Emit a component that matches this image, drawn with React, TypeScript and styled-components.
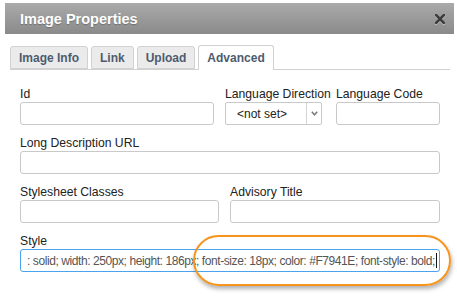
import styled, { createGlobalStyle } from "styled-components";

const GlobalStyle = createGlobalStyle`
  body {
    margin: 0;
    background: #fff;
    font-family: "Liberation Sans", Arial, sans-serif;
  }
`;

const tabs = ["Image Info", "Link", "Upload", "Advanced"];

const App = () => {
  return (
    <Page>
      <GlobalStyle />
      <Dialog>
        <TitleBar>
          <Title>Image Properties</Title>
          <CloseButton aria-label="close">
            <svg width="10" height="10" viewBox="0 0 10 10">
              <path d="M1.2 1.2 L8.8 8.8 M8.8 1.2 L1.2 8.8" stroke="#3c3c3c" strokeWidth="2.6" strokeLinecap="square" />
            </svg>
          </CloseButton>
        </TitleBar>
        <TabStrip>
          {tabs.map((tab) => (
            <Tab key={tab} active={tab === "Advanced"}>
              {tab}
            </Tab>
          ))}
        </TabStrip>
        <Form>
          <Row columns="194px 100px 104px">
            <Field>
              <Label>Id</Label>
              <TextInput />
            </Field>
            <Field>
              <Label>Language Direction</Label>
              <SelectBox>
                <SelectText>&lt;not set&gt;</SelectText>
                <SelectArrow>
                  <svg width="7" height="5" viewBox="0 0 7 5">
                    <path d="M0.8 0.8 L3.5 3.8 L6.2 0.8" fill="none" stroke="#7a7a7a" strokeWidth="1.5" />
                  </svg>
                </SelectArrow>
              </SelectBox>
            </Field>
            <Field>
              <Label>Language Code</Label>
              <TextInput />
            </Field>
          </Row>
          <Row columns="1fr">
            <Field>
              <Label>Long Description URL</Label>
              <TextInput />
            </Field>
          </Row>
          <Row columns="199px 210px">
            <Field>
              <Label>Stylesheet Classes</Label>
              <TextInput />
            </Field>
            <Field>
              <Label>Advisory Title</Label>
              <TextInput />
            </Field>
          </Row>
          <Row columns="1fr">
            <Field>
              <Label>Style</Label>
              <StyleInput>
                : solid; width: 250px; height: 186px; font-size: 18px; color: #F7941E; font-style: bold;
                <Caret />
              </StyleInput>
            </Field>
          </Row>
        </Form>
      </Dialog>
      <Highlight />
    </Page>
  );
};

const Page = styled.div`
  position: relative;
  width: 457px;
  height: 297px;
  padding-top: 3px;
  box-sizing: border-box;
`;

const Dialog = styled.div`
  margin-left: 5px;
  width: 449px;
`;

const TitleBar = styled.div`
  height: 31px;
  display: flex;
  align-items: center;
  justify-content: space-between;
  padding: 0 9px 0 15px;
  background: linear-gradient(#aaaaaa, #8a8a8a);
`;

const Title = styled.div`
  color: #fff;
  font-weight: bold;
  font-size: 14.5px;
  text-shadow: 0 1px 1px rgba(0, 0, 0, 0.25);
`;

const CloseButton = styled.div`
  width: 10px;
  height: 10px;
  display: flex;
  filter: drop-shadow(0 1px 0 rgba(255, 255, 255, 0.35));
`;

const TabStrip = styled.div`
  display: flex;
  align-items: flex-end;
  gap: 3px;
  margin: 10px 4px 0 5px;
  height: 25px;
  border-bottom: 1px solid #d1d1d1;
`;

const Tab = styled.div<{ active: boolean }>`
  box-sizing: border-box;
  height: ${({ active }) => (active ? "25px" : "23px")};
  margin-bottom: ${({ active }) => (active ? "-1px" : "0")};
  padding: 0 8px;
  display: flex;
  align-items: center;
  font-size: 12px;
  font-weight: bold;
  color: #4e5b6e;
  background: ${({ active }) => (active ? "#fff" : "#ebebeb")};
  border: 1px solid #d1d1d1;
  border-bottom: ${({ active }) => (active ? "none" : "1px solid #d1d1d1")};
  border-radius: 3px 3px 0 0;
`;

const Form = styled.div`
  padding: 17px 14px 0 15px;
  display: flex;
  flex-direction: column;
  gap: 11px;
`;

const Row = styled.div<{ columns: string }>`
  display: grid;
  grid-template-columns: ${({ columns }) => columns};
  column-gap: 11px;
`;

const Field = styled.div`
  display: flex;
  flex-direction: column;
  gap: 1px;
  min-width: 0;
`;

const Label = styled.div`
  font-size: 12.2px;
  line-height: 14px;
  color: #222;
  white-space: nowrap;
`;

const TextInput = styled.input`
  box-sizing: border-box;
  width: 100%;
  height: 23px;
  margin: 0;
  border: 1px solid #c9c9c9;
  border-radius: 3px;
  background: #fff;
  outline: none;
`;

const SelectBox = styled.div`
  box-sizing: border-box;
  width: 97px;
  height: 23px;
  display: flex;
  border: 1px solid #c9c9c9;
  border-radius: 2px;
  background: #fff;
`;

const SelectText = styled.div`
  flex: 1;
  display: flex;
  align-items: center;
  padding-left: 11px;
  font-size: 12px;
  color: #222;
`;

const SelectArrow = styled.div`
  width: 14px;
  display: flex;
  align-items: center;
  justify-content: center;
  border-left: 1px solid #d4d4d4;
`;

const StyleInput = styled.div`
  box-sizing: border-box;
  height: 23px;
  display: flex;
  align-items: center;
  padding-left: 6px;
  border: 1px solid #4aa3ee;
  border-radius: 3px;
  font-size: 12px;
  letter-spacing: -0.42px;
  color: #555;
  white-space: pre;
  overflow: hidden;
`;

const Caret = styled.span`
  width: 1px;
  height: 15px;
  margin-left: 1px;
  background: #111;
`;

const Highlight = styled.div`
  position: absolute;
  left: 193px;
  top: 235px;
  width: 258px;
  height: 51px;
  box-sizing: border-box;
  border: 2.5px solid #f7941e;
  border-radius: 26px;
  box-shadow: 1px 3px 4px rgba(0, 0, 0, 0.3);
  pointer-events: none;
`;

export default App;
